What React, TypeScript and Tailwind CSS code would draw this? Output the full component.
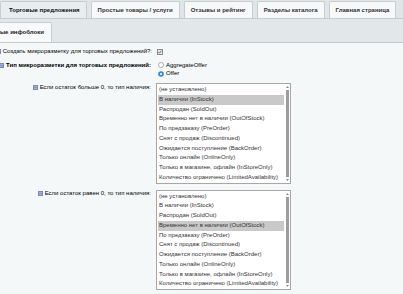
import React from "react";

const options = [
  "(не установлено)",
  "В наличии (InStock)",
  "Распродан (SoldOut)",
  "Временно нет в наличии (OutOfStock)",
  "По предзаказу (PreOrder)",
  "Снят с продаж (Discontinued)",
  "Ожидается поступление (BackOrder)",
  "Только онлайн (OnlineOnly)",
  "Только в магазине, офлайн (InStoreOnly)",
  "Количество ограничено (LimitedAvailability)",
];

const tabs = [
  "Торговые предложения",
  "Простые товары / услуги",
  "Отзывы и рейтинг",
  "Разделы каталога",
  "Главная страница",
];

const HintIcon = () => (
  <svg width="5" height="5" viewBox="0 0 5 5" className="inline-block shrink-0">
    <rect x="0" y="0" width="5" height="5" fill="#7f88bd" />
    <rect x="1" y="1" width="3" height="3" fill="#a9afd6" />
    <rect x="1" y="2" width="3" height="1" fill="#8c94c6" />
  </svg>
);

const CheckBox = () => (
  <svg width="6" height="6" viewBox="0 0 6 6">
    <rect x="0.5" y="0.5" width="5" height="5" fill="#e6e6e6" stroke="#8e8e8e" />
    <path d="M1.4 3 L2.5 4.2 L4.6 1.6" fill="none" stroke="#6d6d6d" strokeWidth="0.9" />
  </svg>
);

const Radio = ({ checked }: { checked?: boolean }) => (
  <svg width="6" height="6" viewBox="0 0 6 6" className="shrink-0">
    {checked ? (
      <>
        <circle cx="3" cy="3" r="2.8" fill="#2f86e6" />
        <circle cx="3" cy="3" r="1.1" fill="#ffffff" />
      </>
    ) : (
      <circle cx="3" cy="3" r="2.5" fill="#ffffff" stroke="#7a7a7a" strokeWidth="0.6" />
    )}
  </svg>
);

const ListBox = ({ selected }: { selected: number }) => (
  <div className="flex w-[135px] border border-[#a7a7a7] bg-white">
    <div className="flex-1 pt-[1px] pl-[1px]">
      {options.map((o, i) => (
        <div
          key={o}
          className={`h-[9.75px] pl-[1px] leading-[9.75px] whitespace-nowrap text-[#333] ${
            i === selected ? "bg-[#c9c9c9]" : ""
          }`}
        >
          {o}
        </div>
      ))}
    </div>
    <div className="flex w-[6px] flex-col items-center">
      <svg width="5" height="4" viewBox="0 0 5 4" className="mt-[1px]">
        <path d="M2.5 1 L4 3 L1 3 Z" fill="#8a8a8a" />
      </svg>
      <div className="my-[1px] w-[3px] flex-1 bg-[#9d9d9d]" />
      <svg width="5" height="4" viewBox="0 0 5 4" className="mb-[1px]">
        <path d="M1 1 L4 1 L2.5 3 Z" fill="#8a8a8a" />
      </svg>
    </div>
  </div>
);

export default function App() {
  return (
    <div className="h-[294px] w-[403px] overflow-hidden bg-[#f4f8f9] font-['Liberation_Sans',Arial,sans-serif] text-[6px] text-black">
      {/* top tabs */}
      <div className="flex h-[19px] items-end gap-[4px] border-b border-[#c4cccf] bg-[#e0e6e8] pt-[2px]">
        {tabs.map((t, i) => (
          <div
            key={t}
            className={`flex h-[17px] items-center rounded-t-[2px] border border-b-0 border-[#c6ced1] font-bold whitespace-nowrap ${
              i === 0
                ? "bg-[#e8eef0] pr-[6px] pl-[8px] text-[#111]"
                : "bg-[#f6f8f9] px-[6px] text-[#333]"
            }`}
          >
            {t}
          </div>
        ))}
      </div>

      {/* sub tabs */}
      <div className="flex h-[24px] items-end border-b border-[#c2cacd] bg-[#e2e8ea] pt-[3px]">
        <div className="flex h-[20px] items-center rounded-tr-[2px] border border-b-0 border-l-0 border-[#c6ced1] bg-[#f7f9fa] pr-[7px] font-bold whitespace-nowrap text-[#222]">
          ые инфоблоки
        </div>
      </div>

      {/* form */}
      <div className="grid grid-cols-[153px_1fr] pt-[4px]">
        <div className="flex h-[9px] items-center justify-end gap-[2px] pr-[1px] whitespace-nowrap">
          <HintIcon />
          <span>Создать микроразметку для торговых предложений?:</span>
        </div>
        <div className="flex h-[9px] items-center pl-[4px]">
          <CheckBox />
        </div>

        <div className="mt-[5px] flex h-[8.5px] items-center justify-end gap-[2px] pr-[2px] font-bold whitespace-nowrap">
          <HintIcon />
          <span>Тип микроразметки для торговых предложений:</span>
        </div>
        <div className="mt-[5px] flex flex-col pl-[5px]">
          <label className="flex h-[8.5px] items-center gap-[2px]">
            <Radio />
            <span>AggregateOffer</span>
          </label>
          <label className="flex h-[8.5px] items-center gap-[2px]">
            <Radio checked />
            <span>Offer</span>
          </label>
        </div>

        <div className="mt-[5px] flex h-[8px] items-center justify-end gap-[2px] pr-[2px] whitespace-nowrap">
          <HintIcon />
          <span>Если остаток больше 0, то тип наличия:</span>
        </div>
        <div className="mt-[5px] pl-[3px]">
          <ListBox selected={1} />
        </div>

        <div className="mt-[6px] flex h-[8px] items-center justify-end gap-[2px] pr-[2px] whitespace-nowrap">
          <HintIcon />
          <span>Если остаток равен 0, то тип наличия:</span>
        </div>
        <div className="mt-[6px] pl-[3px]">
          <ListBox selected={3} />
        </div>
      </div>
    </div>
  );
}
